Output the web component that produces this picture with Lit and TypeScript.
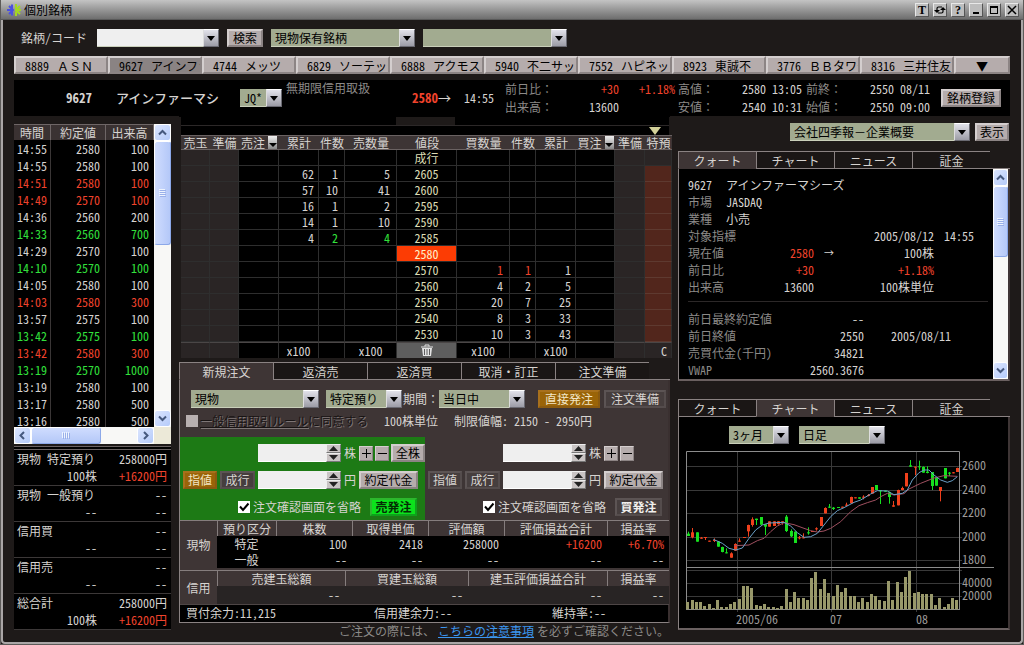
import { LitElement, html, svg, css, nothing } from "lit";
import { customElement, state } from "lit/decorators.js";
import { classMap } from "lit/directives/class-map.js";

type Tone = "" | "up" | "dn";

const STOCKS: [string, string][] = [
  ["8889", "ＡＳＮ"], ["9627", "アインファ"], ["4744", "メッツ"], ["6829", "ソーテック"], ["6888", "アクモス"],
  ["5940", "不二サッシ"], ["7552", "ハピネッ"], ["8923", "東誠不"], ["3776", "ＢＢタワー"], ["8316", "三井住友"],
];

const TICKS: [string, number, number, Tone][] = [
  ["14:55", 2580, 100, ""], ["14:55", 2580, 100, ""], ["14:51", 2580, 100, "up"],
  ["14:49", 2570, 100, "up"], ["14:36", 2560, 200, ""], ["14:33", 2560, 700, "dn"],
  ["14:29", 2570, 100, ""], ["14:10", 2570, 100, "dn"], ["14:05", 2580, 100, ""],
  ["14:03", 2580, 300, "up"], ["13:57", 2575, 100, ""], ["13:42", 2575, 100, "dn"],
  ["13:42", 2580, 300, "up"], ["13:19", 2570, 1000, "dn"], ["13:19", 2580, 100, ""],
  ["13:17", 2580, 500, ""], ["13:16", 2580, 500, ""],
];

const HOLDINGS: [string, string, string, string][] = [
  ["現物 特定預り", "258000円", "100株", "+16200円"],
  ["現物 一般預り", "--", "--", "--"],
  ["信用買", "--", "--", "--"],
  ["信用売", "--", "--", "--"],
  ["総合計", "258000円", "100株", "+16200円"],
];

/* ask total, ask count, ask size, price, bid size, bid count, bid total, tone */
const BOARD: [string, string, string, string, string, string, string, Tone][] = [
  ["", "", "", "成行", "", "", "", ""],
  ["62", "1", "5", "2605", "", "", "", ""],
  ["57", "10", "41", "2600", "", "", "", ""],
  ["16", "1", "2", "2595", "", "", "", ""],
  ["14", "1", "10", "2590", "", "", "", ""],
  ["4", "2", "4", "2585", "", "", "", "dn"],
  ["", "", "", "2580", "", "", "", ""],
  ["", "", "", "2570", "1", "1", "1", "up"],
  ["", "", "", "2560", "4", "2", "5", ""],
  ["", "", "", "2550", "20", "7", "25", ""],
  ["", "", "", "2540", "8", "3", "33", ""],
  ["", "", "", "2530", "10", "3", "43", ""],
];

const TICK_COLS = [37, 55, 48];
const BOARD_COLS = [29, 29, 40, 40, 26, 52, 60, 53, 26, 40, 39, 30, 27];
const CASH_COLS = [37, 59, 76, 76, 76, 103, 62];
const MARGIN_COLS = [37, 128, 123, 139, 62];

/* Plot data in thirds of a pixel: high, body top, body bottom, low, tone */
const CANDLES: [number, number, number, number, "r" | "g"][] = [
  [425, 431, 438, 438, "g"], [414, 427, 442, 445, "r"], [427, 427, 455, 455, "g"],
  [441, 443, 446, 446, "r"], [441, 441, 444, 450, "r"], [452, 452, 455, 455, "r"],
  [445, 450, 453, 456, "r"], [453, 454, 470, 470, "g"], [470, 471, 486, 487, "g"],
  [475, 487, 490, 490, "g"], [487, 490, 503, 503, "r"], [460, 462, 482, 482, "r"],
  [445, 452, 455, 455, "r"], [441, 441, 444, 444, "r"], [404, 405, 424, 440, "r"],
  [382, 388, 405, 410, "r"], [386, 386, 390, 405, "g"], [381, 381, 404, 404, "g"],
  [403, 403, 410, 435, "g"], [394, 394, 410, 410, "r"], [394, 394, 408, 408, "r"],
  [394, 394, 402, 404, "r"], [394, 394, 399, 404, "r"], [375, 380, 423, 426, "g"],
  [418, 423, 439, 441, "g"], [424, 425, 459, 459, "g"], [438, 442, 445, 448, "r"],
  [430, 442, 445, 445, "r"], [412, 427, 430, 434, "g"], [423, 423, 426, 426, "r"],
  [412, 415, 418, 422, "r"], [381, 381, 408, 408, "r"], [352, 354, 370, 370, "r"],
  [342, 350, 353, 354, "g"], [351, 353, 357, 360, "g"], [351, 351, 354, 354, "g"],
  [350, 350, 353, 353, "r"], [338, 344, 347, 348, "r"], [320, 321, 340, 340, "r"],
  [322, 322, 325, 325, "r"], [322, 322, 326, 326, "g"], [316, 320, 323, 328, "r"],
  [312, 315, 318, 319, "r"], [291, 291, 311, 311, "r"], [285, 285, 300, 300, "g"],
  [300, 300, 304, 342, "g"], [302, 302, 305, 305, "g"], [305, 307, 321, 341, "g"],
  [333, 346, 350, 350, "r"], [299, 300, 346, 346, "r"], [290, 294, 300, 301, "r"],
  [249, 249, 289, 289, "r"], [210, 226, 230, 231, "g"], [230, 230, 233, 256, "r"],
  [212, 229, 232, 240, "g"], [229, 231, 248, 248, "g"], [229, 245, 249, 250, "g"],
  [246, 246, 288, 300, "g"], [262, 262, 287, 287, "g"], [291, 291, 303, 334, "r"],
  [234, 234, 265, 265, "g"], [246, 248, 251, 258, "g"], [246, 247, 250, 250, "r"],
  [233, 234, 246, 246, "r"],
];

const VOLUME_TOPS = [
  636, 630, 636, 636, 648, 642, 654, 630, 651, 651, 642, 636, 627, 588, 588, 594, 645, 648, 642, 651, 651, 654,
  648, 597, 636, 606, 624, 624, 630, 564, 546, 597, 567, 609, 618, 585, 606, 594, 618, 618, 636, 624, 636, 612,
  618, 630, 633, 573, 630, 576, 606, 561, 543, 609, 606, 612, 612, 612, 645, 624, 651, 642, 624, 630,
];

const MA_SHORT =
  "118,448 145,460 165,475 185,480 205,474 225,445 245,420 265,405 285,399 330,397 350,408 370,428 390,442 410,440 430,430 450,405 470,380 490,362 510,353 540,337 560,330 590,312 610,302 640,303 660,314 685,310 700,300 715,270 735,248 750,240 765,240 780,255 800,270 820,277 835,272 850,260";
const MA_LONG =
  "180,467 225,465 250,452 270,445 290,425 310,408 330,398 360,404 390,415 410,422 430,426 450,423 470,415 500,395 530,365 555,347 580,338 605,330 620,320 640,310 660,315 690,311 705,297 740,280 780,264 810,257 850,259";

@customElement("app-root")
export class AppRoot extends LitElement {
  @state() private stock = 1;
  @state() private orderTab = 0;
  @state() private upperTab = 0;
  @state() private lowerTab = 1;

  static styles = css`
    * { box-sizing: border-box; }
    :host {
      display: block;
      min-height: 100vh;
      background: #5c5a58;
      color: #d6d3d0;
      font-family: "Noto Sans CJK JP", sans-serif;
      font-size: 12px;
      line-height: 16px;
      font-feature-settings: "hwid" 1;
      white-space: nowrap;
    }
    button, input, select { font: inherit; font-feature-settings: inherit; color: inherit; margin: 0; padding: 0; border: 0; border-radius: 0; }
    table { border-spacing: 0; table-layout: fixed; width: 100%; }
    th, td { padding: 0; font-weight: normal; }
    h1, h2, p { margin: 0; font: inherit; }
    .full { font-feature-settings: normal; }
    .window {
      display: flex; flex-direction: column;
      min-height: 100vh;
      border: solid #5c5a58; border-width: 0 1px 1px 1px;
      background: #1e1a19;
    }
    .inner { flex: 1; border: 2px solid #aaa6a6; border-top: 0; border-radius: 0 0 4px 4px; padding: 0 11px 0 11px; }

    .title { display: flex; align-items: center; height: 20px; padding: 0 4px 0 6px; background: linear-gradient(#c4c4c4, #9c9c9c 45%, #6e6e6e); border-bottom: 1px solid #595959; color: #000; }
    .title h1 { flex: 1; margin-left: 3px; }
    .winbtns { display: flex; gap: 4px; }
    .winbtn { display: grid; place-items: center; width: 14px; height: 14px; background: #bdbdbd; border: 1px solid; border-color: #e8e8e8 #555 #555 #e8e8e8; color: #000; font: bold 12px/12px "Liberation Serif", serif; }

    .btn { height: 18px; line-height: 14px; padding: 0 5px; background: #b5acac; color: #000; border: 2px solid; border-color: #d4cece #8c8484 #8c8484 #d4cece; text-align: center; }
    .btn.find { padding: 0 4px; }
    .btn.dark { background: #463e3e; color: #d6d3d0; border-color: #5c5454 #544c4c #544c4c #5c5454; }
    .btn.amber { background: #9a6408; color: #f2e4c4; border-color: #a8701c #8a5a10 #8a5a10 #a8701c; }
    .btn.go { background: #0ce21c; color: #042c04; border-color: #2cb82c #0fa01c #0fa01c #2cb82c; font-weight: bold; }
    .btn.buy { font-weight: bold; color: #f0eeec; }

    .dd { display: inline-grid; grid-template-columns: 1fr; height: 18px; }
    .dd > * { grid-area: 1 / 1; }
    .dd select, .dd input { appearance: none; width: 100%; height: 18px; line-height: 16px; padding: 0 18px 0 4px; background: #a2ab90; color: #000; border-bottom: 1px solid #c9cfba; border-radius: 0; outline: 0; font-feature-settings: inherit; }
    .dd input { background: #efefef; }
    .dd .arrow { justify-self: end; display: grid; place-items: center; width: 16px; height: 18px; background: linear-gradient(#e2e2ea, #9c9ca6); border: 1px solid; border-color: #fff #6a6a72 #6a6a72 #ddd; pointer-events: none; }

    .toolbar { display: flex; align-items: center; gap: 8px; height: 36px; padding-left: 7px; }
    .toolbar label { margin-right: 2px; }
    .w122 { width: 122px; } .w144 { width: 144px; } .w128 { width: 128px; } .w76 { width: 76px; }
    .w86 { width: 86px; } .w180 { width: 180px; } .w60 { width: 60px; } .w42 { width: 42px; }

    .stocks { display: grid; grid-template-columns: repeat(10, 94fr) 56fr; }
    .stocks .btn { display: flex; gap: 8px; overflow: hidden; padding: 0 0 0 9px; line-height: 15px; }
    .stocks .on { background: #8a8383; }
    .stocks .more { justify-content: center; padding: 0; }

    .info { display: grid; grid-template-columns: 102px 124px 46px 126px 52px 41px 44px 70px 59px 64px 64px 64px 59px 1fr; align-items: center; height: 36px; margin-top: 6px; background: #000; }
    .info .code { padding-left: 52px; font-size: 13px; font-weight: bold; }
    .info .name { font-size: 13px; font-weight: 500; }
    .info .last { font-weight: bold; font-size: 13px; }
    .info .last i { font-style: normal; font-weight: normal; color: #d6d3d0; }
    .info .pair { line-height: 18px; align-self: start; }
    .info .note { align-self: start; line-height: 16px; }
    .info .reg { justify-self: end; margin-right: 9px; width: 60px; padding: 0; }
    .info .pair div { height: 18px; }
    .info .pct { padding-right: 3px; }
    .dim { color: #8c8a88; }
    .r { text-align: right; }
    .up { color: #f0432c; }
    .dn { color: #32e03c; }

    .main { display: grid; grid-template-columns: 157px minmax(0, 1fr) 332px; column-gap: 8px; }

    .left { padding-top: 8px; }
    .ticks { display: grid; grid-template-columns: 140px 17px; grid-template-rows: 303px 17px; background: #ece9d8; }
    .tickview { overflow: hidden; background: #000; }
    .tickview th { height: 16px; line-height: 15px; background: #3a3232; border-right: 1px solid #6e6666; border-top: 1px solid #6e6666; }
    .tickview td { height: 17px; border-right: 1px solid #3a3636; padding: 0 5px 0 3px; line-height: 16px; }
    .tickview td:last-child { border-right: 0; }
    .vbar, .hbar { display: flex; background: #f8f8f6; }
    .vbar { flex-direction: column; }
    .sb { display: grid; place-items: center; flex: none; width: 100%; height: 17px; background: linear-gradient(135deg, #dbe5fe, #b5cbfa); border: 1px solid #fff; border-radius: 3px; }
    .hbar .sb { width: 17px; }
    .thumb { display: grid; place-items: center; flex: none; background: linear-gradient(90deg, #cfdcfe, #b4c8f8); border: 1px solid #8ca8e8; border-top-color: #fff; border-left-color: #fff; border-radius: 3px; }
    .hbar .thumb { background: linear-gradient(#cfdcfe, #b4c8f8); }
    .fill { flex: 1; }
    .t104 { height: 104px; } .t71 { height: 71px; } .t70w { width: 70px; }
    .holdings { margin-top: 2px; border-top: 4px double #6a6262; background: #000; }
    .hold { display: grid; grid-template-columns: 80px 1fr; grid-auto-rows: 17px; line-height: 17px; height: 36px; padding: 0 4px 0 3px; border-bottom: 1px solid #3c3838; }
    .hold .top { grid-column: 1 / 3; display: flex; justify-content: space-between; }

    .band { display: grid; grid-template-columns: 216fr 60fr 215fr; height: 8px; }
    .band i { background: #000; } .band .gap { background: none; }
    .marker { display: flex; justify-content: flex-end; align-items: end; height: 10px; padding-right: 8px; border-top: 1px solid #2c2828; background: #000; }
    .mid { border-top: 1px solid #000; min-width: 0; }
    .boardwrap { padding: 0 1px 0 2px; }
    .board th { height: 15px; line-height: 13px; background: #3d3535; border-top: 1px solid #6a6262; border-bottom: 1px solid #6a6262; overflow: hidden; }
    .board th > span { display: flex; justify-content: center; align-items: center; }
    .board th .sort { display: grid; place-items: end center; width: 9px; height: 13px; margin-left: 3px; background: linear-gradient(#eee, #888); }
    .board td { height: 16px; line-height: 15px; background: #000; border-right: 1px solid #2e2e2e; border-bottom: 1px solid #2e2e2e; text-align: right; padding-right: 4px; }
    .board td.n { padding-right: 6px; }
    .board td.side { background: #2a2525; }
    .board td.sp { background: #52261c; border-bottom-color: #5e3a30; }
    .board td.px { text-align: center; padding: 0; color: #dcdcb4; }
    .board td.cur { background: #fc3c04; color: #fff0c8; }
    .board tfoot td { border-bottom: 0; border-top: 1px solid #4a4646; text-align: center; padding: 0; line-height: 14px; }
    .board tfoot td:last-child { text-align: right; padding-right: 4px; }
    .board tfoot td.bin { background: #5e5e5e; }
    .board tfoot .bin svg { display: block; margin: auto; }

    .tabs { display: flex; }
    .tab { flex: 0 1 94px; height: 18px; line-height: 15px; background: #1a1615; border: solid #8a8282; border-width: 1px 0 1px 1px; }
    .tab.on { background: #3e3535; border-bottom-color: #3e3535; }
    .tabs::after { content: ""; flex: 1; border-bottom: 1px solid #8a8282; }
    .right .tab { flex-basis: 78px; }

    .order { border: solid #8a8282; border-width: 0 2px 1px 1px; border-right-color: #3a3030; background: #3e3535; }
    .ordertabs { margin-top: 4px; }
    .cond { display: flex; align-items: center; height: 28px; padding: 10px 0 0 11px; }
    .cond .gap { margin-left: 7px; }
    .cond .term { margin-left: 1px; }
    .cond .direct { margin-left: 13px; }
    .cond .prep { margin-left: 4px; }
    .rule { display: flex; align-items: center; height: 29px; padding: 0 0 3px 6px; }
    .rule input { appearance: none; width: 12px; height: 12px; background: #b8b0b0; }
    .rule label { width: 184px; margin: 0 0 0 2px; color: #191414; text-shadow: 1px 1px #7e7676; }
    .rule .lim { margin-left: 16px; }
    .sides { display: grid; grid-template-columns: 246fr 244fr; }
    .side-f { display: grid; grid-template-columns: 34px 35px 83px 12px 1fr; gap: 9px 3px; align-items: center; padding: 7px 0 4px 3px; height: 83px; }
    .sell { background: #1d7a15; }
    .side-f .btn { padding: 0; }
    .side-f .qty { grid-column: 3; }
    .spin { display: grid; grid-template-columns: 1fr 15px; grid-template-rows: 9px 9px; }
    .spin input { grid-row: 1 / 3; width: 100%; background: #efefef; border-bottom: 1px solid #fff; color: #000; outline: 0; }
    .spin button { display: grid; place-items: center; background: #c9c4c4; border: 1px solid #eee; border-right-color: #777; border-bottom-color: #777; }
    .pm { display: flex; gap: 2px; align-items: center; }
    .pm .sq { display: grid; place-items: center; width: 14px; height: 15px; border-width: 1px; }
    .pm .all { width: 34px; }
    .side-f .cash { width: 59px; }
    .send { grid-column: 1 / 6; display: flex; align-items: center; padding-left: 55px; }
    .send label { margin: 0 9px 0 3px; }
    .send input { appearance: none; width: 12px; height: 12px; background: #fff; }
    .send input:not(:checked) + svg { visibility: hidden; }
    .send .tick { display: inline-grid; }
    .send .tick > * { grid-area: 1 / 1; }
    .send .tick svg { pointer-events: none; }
    .send .btn { width: 47px; }

    .pos th { height: 16px; line-height: 14px; background: #3e3535; border: solid #857d7d; border-width: 1px 0 0 1px; }
    .pos th.head { border-left: 0; }
    .pos td { height: 16px; line-height: 16px; background: #000; text-align: right; padding-right: 5px; }
    .pos td.c { text-align: center; padding: 0; }
    .pos { border-bottom: 2px solid #3e3535; }
    .pos + .pos { border-bottom: 1px solid #4e4646; }
    .pos + .pos th { height: 16px; }
    .pos + .pos td { background: #282424; height: 18px; }
    .power { display: grid; grid-template-columns: 188px 178px 1fr; height: 17px; line-height: 16px; padding-left: 6px; background: #000; }
    .notice { padding-right: 1px; text-align: right; color: #8c8a88; }
    .notice a { color: #3c96f0; margin: 0 3px; }

    .right { padding-top: 7px; }
    .report { display: flex; justify-content: flex-end; gap: 5px; height: 18px; padding-right: 1px; margin-bottom: 10px; }
    .report .btn { width: 34px; padding: 0; }
    .right .panel { border: solid #8a8282; border-width: 0 2px 2px 1px; border-right-color: #3e3535; border-bottom-color: #6a6060; background: #000; }
    .quote { display: flex; height: 212px; }
    .quote .vbar { flex: 0 0 15px; }
    .qbody { flex: 1; padding: 7px 5px 0 9px; line-height: 17px; min-width: 0; }
    .q1 { display: grid; grid-template-columns: 38px 1fr; }
    .q2 { display: grid; grid-template-columns: 50px 76px 20px 100px 40px; }
    .q2 .arr { font-size: 10px; }
    .q3 { display: grid; grid-template-columns: 96px 80px 1fr; }
    .q3 :last-child { padding-left: 27px; }
    .q2 .wide { grid-column: 2 / 5; }
    .qbody hr { margin: 6px 0 8px 0; border: 0; height: 1px; background: #2c2828; }
    .second { margin-top: 18px; }
    .chartpanel { height: 213px; }
    .period { display: flex; gap: 10px; padding: 9px 0 0 50px; height: 28px; }
    .plot { display: block; width: 328px; height: 183px; font-size: 12px; }
    .plot text { fill: #9c9a98; }
    .grid { stroke: #393939; } .frame { stroke: #8c8c8c; }
    .cr { fill: #f0401c; } .cg { fill: #16e01e; } .vol { fill: #98986a; }
    .ms { fill: none; stroke: #6aa0c8; } .ml { fill: none; stroke: #a05060; }
  `;

  private arrow = () => html`<span class="arrow"><svg width="8" height="5"><path d="M0 0h8L4 5z" fill="#000" /></svg></span>`;

  private dd(name: string, width: string, options: string[]) {
    return html`<span class="dd ${width}"><select aria-label=${name}>${options.map((o) => html`<option>${o}</option>`)}</select>${this.arrow()}</span>`;
  }

  private cols(widths: number[]) {
    return html`<colgroup>${widths.map((w) => html`<col style="width:${w}px" />`)}</colgroup>`;
  }

  private sb(name: string, d: string) {
    return html`<button class="sb" aria-label=${name}><svg width="9" height="9"><path d=${d} fill="none" stroke="#46597e" stroke-width="2" /></svg></button>`;
  }

  private vbar(thumb: string) {
    return html`<div class="vbar">${this.sb("上へ", "M1 6.5L4.5 3L8 6.5")}
      <div class="thumb ${thumb}"><svg width="7" height="8"><path d="M0 .5h6M0 2.5h6M0 4.5h6M0 6.5h6" stroke="#eef4fe" /><path d="M1 1.5h6M1 3.5h6M1 5.5h6M1 7.5h6" stroke="#9ab0ea" /></svg></div>
      <div class="fill"></div>${this.sb("下へ", "M1 2.5L4.5 6L8 2.5")}</div>`;
  }

  private tabs(labels: string[], active: number, pick: (i: number) => void, extra = "") {
    return html`<div class="tabs ${extra}" role="tablist">${labels.map(
      (l, i) => html`<button role="tab" aria-selected=${i === active} class=${classMap({ tab: true, on: i === active })} @click=${() => pick(i)}>${l}</button>`,
    )}</div>`;
  }

  private titleBar() {
    return html`<header class="title">
      <svg width="14" height="14" viewBox="0 0 14 14">
        <g fill="none" stroke-width="2"><path d="M2 3l4 4l-4 4M0 7h6M5 1.500v4M5 12.500v-4" stroke="#4a50e0" /><path d="M13 3L9 7l4 4M14 7H8M9 1v4.500M9 13V8.500" stroke="#a4d820" /></g>
      </svg>
      <h1>個別銘柄</h1>
      <div class="winbtns">
        <button class="winbtn">T</button>
        <button class="winbtn" aria-label="更新"><svg width="12" height="10" viewBox="0 0 12 10"><path d="M3 6V3.500q0-1.500 1.500-1.500H8M9 4v2.500Q9 8 7.500 8H4" fill="none" stroke="#000" stroke-width="1.200" /><path d="M0 5h6L3 8zM6 5h6L9 2z" /></svg></button>
        <button class="winbtn">?</button>
        <button class="winbtn" aria-label="最小化"><svg width="10" height="10"><path d="M2 7h6v2H2z" /></svg></button>
        <button class="winbtn" aria-label="最大化"><svg width="10" height="10"><path d="M1 1h8v8H1zM2 3v5h6V3z" fill-rule="evenodd" /></svg></button>
        <button class="winbtn" aria-label="閉じる"><svg width="10" height="10"><path d="M1 1l8 8M9 1L1 9" stroke="#000" stroke-width="1.500" /></svg></button>
      </div>
    </header>`;
  }

  private infoBar() {
    return html`<section class="info">
      <span class="code">9627</span><span class="name">アインファーマシ</span>
      ${this.dd("市場", "w42", ["JQ*"])}
      <span class="note dim">無期限信用取扱</span>
      <span class="last up">2580<i>→</i></span>
      <span>14:55</span>
      <div class="pair dim full"><div>前日比：</div><div>出来高：</div></div>
      <div class="pair r"><div class="up">+30</div><div>13600</div></div>
      <div class="pair r pct"><div class="up">+1.18%</div></div>
      <div class="pair dim full"><div>高値：</div><div>安値：</div></div>
      <div class="pair"><div>2580 13:05</div><div>2540 10:31</div></div>
      <div class="pair dim full"><div>前終：</div><div>始値：</div></div>
      <div class="pair"><div>2550 08/11</div><div>2550 09:00</div></div>
      <button class="btn reg">銘柄登録</button>
    </section>`;
  }

  private leftColumn() {
    return html`<div class="left">
      <div class="ticks">
        <div class="tickview"><table>
          ${this.cols(TICK_COLS)}
          <thead><tr><th>時間</th><th>約定値</th><th>出来高</th></tr></thead>
          <tbody>${TICKS.map(([t, p, v, tone]) => html`<tr class=${tone}><td>${t}</td><td class="r">${p}</td><td class="r">${v}</td></tr>`)}</tbody>
        </table></div>
        ${this.vbar("t104")}
        <div class="hbar">${this.sb("左へ", "M6 1L2.500 4.500L6 8")}
          <div class="thumb t70w"><svg width="8" height="7"><path d="M.5 0v6M2.500 0v6M4.500 0v6M6.500 0v6" stroke="#eef4fe" /><path d="M1.500 1v6M3.500 1v6M5.500 1v6M7.500 1v6" stroke="#9ab0ea" /></svg></div>
          <div class="fill"></div>${this.sb("右へ", "M3 1l3.500 3.500L3 8")}</div>
      </div>
      <div class="holdings">${HOLDINGS.map(
        ([name, value, qty, gain]) => html`<div class="hold"><div class="top"><span>${name}</span><span>${value}</span></div>
          <span class="r">${qty}</span><span class="r ${gain[0] === "+" ? "up" : ""}">${gain}</span></div>`,
      )}</div>
    </div>`;
  }

  private board() {
    const heads = ["売玉", "準備", "売注", "累計", "件数", "売数量", "値段", "買数量", "件数", "累計", "買注", "準備", "特預"];
    const foot = ["", "", "", "x100", "", "x100", "bin", "x100", "", "x100", "", "", "C"];
    return html`<div class="boardwrap">
      <div class="band"><i></i><i class="gap"></i><i></i></div>
      <div class="marker"><svg width="12" height="8"><path d="M0 0h12L6 8z" fill="#d4d29a" /></svg></div>
      <table class="board">
        ${this.cols(BOARD_COLS)}
        <thead><tr>${heads.map(
          (h, i) => html`<th><span>${h}${i === 2 || i === 10 ? html`<button class="sort" aria-label="並べ替え"><svg width="8" height="6"><path d="M0 0h8L4 4z" /></svg></button>` : nothing}</span></th>`,
        )}</tr></thead>
        <tbody>${BOARD.map(
          (b, i) => html`<tr>
            <td class="side"></td><td class="side"></td><td></td>
            <td>${b[0]}</td><td class="n ${b[0] ? b[7] : ""}">${b[1]}</td><td class="n ${b[0] ? b[7] : ""}">${b[2]}</td>
            <td class="px ${b[3] === "2580" ? "cur" : ""}">${b[3]}</td>
            <td class="n ${b[4] ? b[7] : ""}">${b[4]}</td><td class="${b[4] ? b[7] : ""}">${b[5]}</td><td>${b[6]}</td>
            <td></td><td class="side"></td><td class=${i ? "sp" : "side"}></td>
          </tr>`,
        )}</tbody>
        <tfoot><tr>${foot.map((f, i) =>
          f === "bin"
            ? html`<td class="bin"><svg width="12" height="13" viewBox="0 0 12 13"><path d="M0 3h12M4 2.500V1h4v1.500" fill="none" stroke="#e4e4e4" /><path d="M1 4h10l-1 8H2z" fill="#e4e4e4" /><path d="M3.500 5v6M6 5v6M8.500 5v6" stroke="#5e5e5e" /></svg></td>`
            : html`<td class=${i < 2 || i > 10 ? "side" : ""}>${f}</td>`,
        )}</tr></tfoot>
      </table>
    </div>`;
  }

  private spin(label: string) {
    return html`<span class="spin"><input type="text" aria-label=${label} />
      <button aria-label="増やす"><svg width="9" height="5"><path d="M0 5L4.500 0L9 5z" fill="#222" /></svg></button>
      <button aria-label="減らす"><svg width="9" height="5"><path d="M0 0h9L4.500 5z" fill="#222" /></svg></button></span>`;
  }

  private side(kind: "sell" | "buy") {
    const sell = kind === "sell";
    return html`<div class=${classMap({ "side-f": true, sell })}>
      <span class="qty">${this.spin("株数")}</span><span>株</span>
      <span class="pm">
        <button class="btn sq" aria-label="増やす"><svg width="9" height="9"><path d="M0 4.500h9M4.500 0v9" stroke="#000" /></svg></button>
        <button class="btn sq" aria-label="減らす"><svg width="9" height="9"><path d="M0 4.500h9" stroke="#000" /></svg></button>
        ${sell ? html`<button class="btn all">全株</button>` : nothing}
      </span>
      <button class="btn ${sell ? "amber" : "dark"}">指値</button><button class="btn dark">成行</button>
      ${this.spin("値段")}<span>円</span><button class="btn cash">約定代金</button>
      <div class="send">
        <span class="tick"><input type="checkbox" id="skip-${kind}" checked /><svg width="12" height="12"><path d="M2 5.500L5 9L10.500 2.500" fill="none" stroke="#000" stroke-width="2" /></svg></span>
        <label for="skip-${kind}">注文確認画面を省略</label>
        <button class="btn ${sell ? "go" : "dark buy"}">${sell ? "売発注" : "買発注"}</button>
      </div>
    </div>`;
  }

  private orderPanel() {
    return html`${this.tabs(["新規注文", "返済売", "返済買", "取消・訂正", "注文準備"], this.orderTab, (i) => (this.orderTab = i), "ordertabs")}
      <section class="order">
        <div class="cond">
          ${this.dd("取引", "w128", ["現物"])}<span class="gap"></span>${this.dd("預り", "w76", ["特定預り"])}
          <span class="term full">期間：</span>${this.dd("期間", "w86", ["当日中"])}
          <button class="btn amber direct">直接発注</button><button class="btn dark prep">注文準備</button>
        </div>
        <div class="rule"><input type="checkbox" id="rule" disabled /><label for="rule"><u>一般信用取引ルール</u>に同意する</label>
          <span>100株単位</span><span class="lim">制限値幅: 2150 - 2950円</span></div>
        <div class="sides">${this.side("sell")}${this.side("buy")}</div>
        <table class="pos">
          ${this.cols(CASH_COLS)}
          <tbody>
            <tr><th class="head" rowspan="3">現物</th>${["預り区分", "株数", "取得単価", "評価額", "評価損益合計", "損益率"].map((h) => html`<th>${h}</th>`)}</tr>
            <tr><td class="c">特定</td><td>100</td><td>2418</td><td>258000</td><td class="up">+16200</td><td class="up">+6.70%</td></tr>
            <tr><td class="c">一般</td><td>--</td><td>--</td><td>--</td><td>--</td><td>--</td></tr>
          </tbody>
        </table>
        <table class="pos">
          ${this.cols(MARGIN_COLS)}
          <tbody>
            <tr><th class="head" rowspan="2">信用</th>${["売建玉総額", "買建玉総額", "建玉評価損益合計", "損益率"].map((h) => html`<th>${h}</th>`)}</tr>
            <tr><td>--</td><td>--</td><td>--</td><td>--</td></tr>
          </tbody>
        </table>
        <div class="power"><span>買付余力:11,215</span><span>信用建余力:--</span><span>維持率:--</span></div>
      </section>
      <p class="notice">ご注文の際には、<a href="#">こちらの注意事項</a>を必ずご確認ください。</p>`;
  }

  private chart() {
    const X = (v: number) => (v - 15) / 3;
    const Y = (v: number) => (v - 165) / 3;
    const line = (pts: string) => pts.split(" ").map((p) => p.split(",").map(Number)).map(([a, b]) => `${X(a)},${Y(b)}`).join(" ");
    return svg`
      ${[21.5, 45.5, 68.5, 92.5, 115.5, 125.5, 138.5, 151.5].map((y) => svg`<path class="grid" d="M8 ${y}H283" />`)}
      ${[58.5, 152.5, 237.5].map((x) => svg`<path class="grid" d="M${x} 7V167" />`)}
      <path class="frame" d="M7.500 165V6.500H280.500V164.500M7 164.500H281M8 122.500H315" fill="none" />
      ${VOLUME_TOPS.map((t, i) => svg`<rect class="vol" x=${Math.round(X(37 + i * 12.81))} y=${Y(t)} width="3" height=${(658 - t) / 3} />`)}
      ${CANDLES.map(([h, t, b, l, c], i) => {
        const x = Math.round(X(39 + i * 12.83));
        return svg`<rect class="c${c}" x=${x} y=${Y(t)} width="3" height=${(b - t) / 3} /><rect class="c${c}" x=${x + 1} y=${Y(h)} width="1" height=${(l - h) / 3} />`;
      })}
      <polyline class="ml" points=${line(MA_LONG)} /><polyline class="ms" points=${line(MA_SHORT)} />
      ${[2600, 2400, 2200, 2000, 1800].map((v, i) => svg`<text x="283" y=${Math.round(25 + i * 23.5)}>${v}</text>`)}
      <text x="283" y="142">40000</text><text x="283" y="155">20000</text>
      <text x="57" y="179">2005/06</text><text x="151" y="179">07</text><text x="237" y="179">08</text>`;
  }

  private rightColumn() {
    const names = ["クォート", "チャート", "ニュース", "証金"];
    return html`<div class="right">
      <div class="report full">${this.dd("レポート", "w180", ["会社四季報－企業概要"])}<button class="btn">表示</button></div>
      ${this.tabs(names, this.upperTab, (i) => (this.upperTab = i))}
      <section class="panel quote">
        <div class="qbody">
          <div class="q1"><span>9627</span><span>アインファーマシーズ</span></div>
          <div class="q1"><span class="dim">市場</span><span>JASDAQ</span></div>
          <div class="q1"><span class="dim">業種</span><span>小売</span></div>
          <div class="q2"><span class="dim">対象指標</span><span class="wide r">2005/08/12</span><span class="r">14:55</span></div>
          <div class="q2"><span class="dim">現在値</span><span class="r up">2580</span><span class="r arr">→</span><span class="r">100株</span></div>
          <div class="q2"><span class="dim">前日比</span><span class="r up">+30</span><span></span><span class="r up">+1.18%</span></div>
          <div class="q2"><span class="dim">出来高</span><span class="r">13600</span><span></span><span class="r">100株単位</span></div>
          <hr />
          <div class="q3"><span class="dim">前日最終約定値</span><span class="r">--</span><span></span></div>
          <div class="q3"><span class="dim">前日終値</span><span class="r">2550</span><span>2005/08/11</span></div>
          <div class="q3"><span class="dim">売買代金(千円)</span><span class="r">34821</span><span></span></div>
          <div class="q3"><span class="dim">VWAP</span><span class="r">2560.3676</span><span></span></div>
        </div>
        ${this.vbar("t71")}
      </section>
      ${this.tabs(names, this.lowerTab, (i) => (this.lowerTab = i), "second")}
      <section class="panel chartpanel">
        <div class="period">${this.dd("期間", "w60", ["3ヶ月"])}${this.dd("足", "w86", ["日足"])}</div>
        <svg class="plot" viewBox="0 0 328 183">${this.chart()}</svg>
      </section>
    </div>`;
  }

  render() {
    return html`<div class="window">
      ${this.titleBar()}
      <div class="inner">
        <div class="toolbar">
          <label for="code">銘柄/コード</label>
          <span class="dd w122"><input id="code" type="text" />${this.arrow()}</span>
          <button class="btn find">検索</button>
          ${this.dd("銘柄グループ", "w144", ["現物保有銘柄"])}${this.dd("サブグループ", "w144", [""])}
        </div>
        <nav class="stocks">${STOCKS.map(
          ([code, name], i) => html`<button class=${classMap({ btn: true, on: i === this.stock })} @click=${() => (this.stock = i)}><span>${code}</span><span class="full">${name}</span></button>`,
        )}<button class="btn more">▼</button></nav>
        ${this.infoBar()}
        <div class="main">
          ${this.leftColumn()}
          <div class="mid">${this.board()}${this.orderPanel()}</div>
          ${this.rightColumn()}
        </div>
      </div>
    </div>`;
  }
}
